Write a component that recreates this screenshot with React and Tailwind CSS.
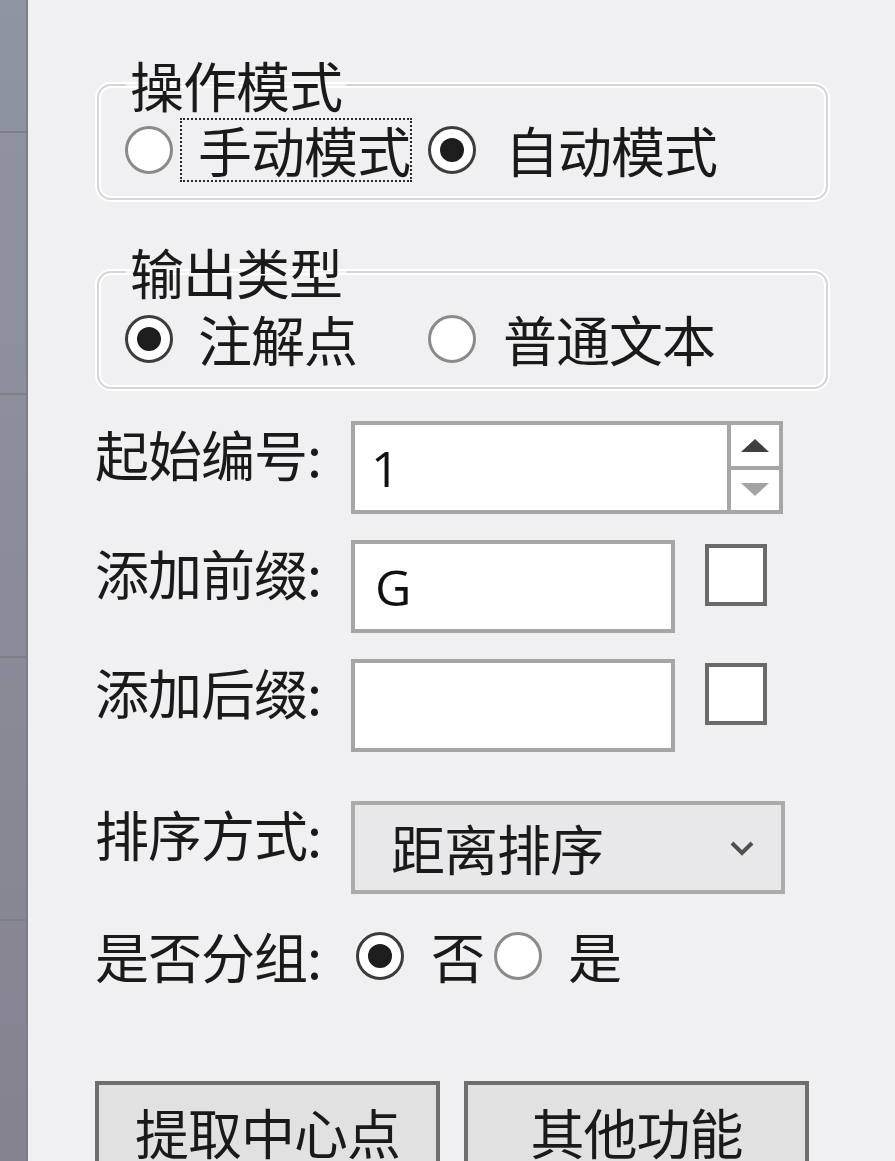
import React from "react";

const font = { fontFamily: '"Noto Sans CJK SC", "Noto Sans", sans-serif' };
const latin = { fontFamily: '"Open Sans", "Noto Sans", sans-serif' };

const Radio = ({ checked }) => (
  <span
    className={`flex h-[48px] w-[48px] shrink-0 items-center justify-center rounded-full border-[3px] bg-white ${
      checked ? "border-[#3c3c3c]" : "border-[#8a8a8a]"
    }`}
  >
    {checked && <span className="h-[24px] w-[24px] rounded-full bg-[#1e1e1e]" />}
  </span>
);

const GroupBox = ({ title, children, className = "" }) => (
  <fieldset
    className={`ml-[2px] w-[731px] rounded-[14px] border-2 border-[#d6d6d8] px-[26px] pb-[16px] shadow-[0_0_0_2px_#ffffff,inset_0_0_0_2px_#ffffff] ${className}`}
  >
    <legend className="ml-[1px] px-[4px] text-[54px] leading-[48px] tracking-[-1px] text-[#1a1a1a]">
      {title}
    </legend>
    {children}
  </fieldset>
);

const Label = ({ children }) => (
  <div className="mt-[6px] w-[256px] shrink-0 text-[54px] leading-[54px] tracking-[-1px] text-[#1a1a1a]">
    {children}
  </div>
);

const Checkbox = () => (
  <div className="ml-[30px] mt-[4px] h-[62px] w-[62px] shrink-0 border-[4px] border-[#6a6a6a] bg-white" />
);

const Spinner = ({ value }) => (
  <div className="flex h-[93px] w-[432px] border-[4px] border-[#a6a6a6] bg-white">
    <div
      className="flex flex-1 items-center pl-[16px] text-[50px] leading-none text-[#111]"
      style={latin}
    >
      {value}
    </div>
    <div className="flex w-[52px] flex-col border-l-[4px] border-[#a6a6a6]">
      <div className="flex flex-1 items-center justify-center border-b-[4px] border-[#a6a6a6]">
        <svg width="30" height="15" viewBox="0 0 30 15">
          <path d="M15 1 L29 14 L1 14 Z" fill="#3f3f3f" />
        </svg>
      </div>
      <div className="flex flex-1 items-center justify-center">
        <svg width="30" height="15" viewBox="0 0 30 15">
          <path d="M1 1 L29 1 L15 14 Z" fill="#a3a3a3" />
        </svg>
      </div>
    </div>
  </div>
);

const TextBox = ({ value }) => (
  <div
    className="flex h-[93px] w-[324px] items-center border-[4px] border-[#a6a6a6] bg-white pl-[20px] text-[50px] leading-none text-[#111]"
    style={latin}
  >
    {value}
  </div>
);

const App = () => {
  return (
    <div
      className="flex h-[1161px] w-[895px] overflow-hidden bg-[#f0f0f2]"
      style={font}
    >
      {/* left dock strip */}
      <div className="flex w-[28px] shrink-0 flex-col border-r-[2px] border-[#7b7d88] bg-gradient-to-b from-[#9095a2] to-[#858290]">
        <div className="h-[133px] border-b-[2px] border-[#7c7f8a]" />
        <div className="h-[262px] border-b-[2px] border-[#7c7f8a]" />
        <div className="h-[263px] border-b-[2px] border-[#7c7f8a]" />
        <div className="h-[263px] border-b-[2px] border-[#7c7f8a]" />
        <div className="flex-1" />
      </div>

      {/* form panel */}
      <div className="flex flex-1 flex-col pl-[67px] pt-[61px]">
        <GroupBox title="操作模式">
          <div className="mt-[9px] flex h-[64px] items-center text-[54px] leading-[54px] tracking-[-1px] text-[#1a1a1a]">
            <div className="flex w-[303px] items-center">
              <Radio />
              <span className="ml-[7px] flex h-[64px] items-center border-2 border-dotted border-[#2a2a2a] pl-[16px]">
                手动模式
              </span>
            </div>
            <Radio checked />
            <span className="ml-[29px]">自动模式</span>
          </div>
        </GroupBox>

        <GroupBox title="输出类型" className="mt-[48px]">
          <div className="mt-[11px] flex h-[64px] items-center text-[54px] leading-[54px] tracking-[-1px] text-[#1a1a1a]">
            <div className="flex w-[303px] items-center">
              <Radio checked />
              <span className="ml-[25px]">注解点</span>
            </div>
            <Radio />
            <span className="ml-[27px]">普通文本</span>
          </div>
        </GroupBox>

        <div className="mt-[32px] flex items-start">
          <Label>起始编号:</Label>
          <Spinner value="1" />
        </div>

        <div className="mt-[26px] flex items-start">
          <Label>添加前缀:</Label>
          <TextBox value="G" />
          <Checkbox />
        </div>

        <div className="mt-[26px] flex items-start">
          <Label>添加后缀:</Label>
          <TextBox value="" />
          <Checkbox />
        </div>

        <div className="mt-[49px] flex items-start">
          <Label>排序方式:</Label>
          <div className="flex h-[93px] w-[434px] items-center justify-between border-[4px] border-[#ababab] bg-[#e8e8ea] pl-[36px] pr-[26px] text-[54px] leading-none tracking-[-1px] text-[#1a1a1a]">
            <span>距离排序</span>
            <svg width="26" height="18" viewBox="0 0 26 18">
              <path
                d="M3 4 L13 14 L23 4"
                fill="none"
                stroke="#505050"
                strokeWidth="4"
              />
            </svg>
          </div>
        </div>

        <div className="mt-[35px] flex h-[54px] items-center text-[54px] leading-[54px] tracking-[-1px] text-[#1a1a1a]">
          <div className="w-[261px] shrink-0">是否分组:</div>
          <Radio checked />
          <span className="ml-[27px]">否</span>
          <span className="ml-[10px]">
            <Radio />
          </span>
          <span className="ml-[26px]">是</span>
        </div>

        <div className="mt-[98px] flex gap-[24px]">
          <button className="flex h-[100px] w-[345px] shrink-0 items-start justify-center border-[4px] border-[#6e6e6e] bg-[#e1e1e1] pt-[20px] text-[54px] leading-[54px] tracking-[-1px] text-[#1a1a1a]">
            提取中心点
          </button>
          <button className="flex h-[100px] w-[345px] shrink-0 items-start justify-center border-[4px] border-[#6e6e6e] bg-[#e1e1e1] pt-[20px] text-[54px] leading-[54px] tracking-[-1px] text-[#1a1a1a]">
            其他功能
          </button>
        </div>
      </div>
    </div>
  );
};

export default App;
